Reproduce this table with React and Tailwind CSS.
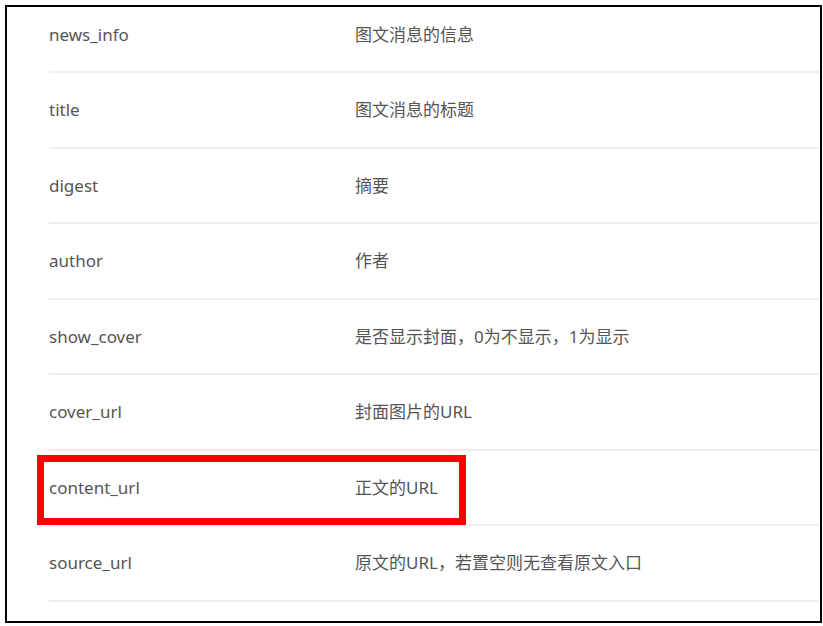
const rows = [
  ["news_info", "图文消息的信息"],
  ["title", "图文消息的标题"],
  ["digest", "摘要"],
  ["author", "作者"],
  ["show_cover", "是否显示封面，0为不显示，1为显示"],
  ["cover_url", "封面图片的URL"],
  ["content_url", "正文的URL"],
  ["source_url", "原文的URL，若置空则无查看原文入口"],
];

const App = () => {
  return (
    <div className="w-[823px] h-[626px] bg-white pt-[5px] pl-[5px] overflow-hidden">
      <div
        className="relative w-[817px] h-[618px] border-2 border-black overflow-hidden text-[17px] text-[#555]"
        style={{ fontFamily: '"Noto Sans", "Noto Sans CJK SC", sans-serif' }}
      >
        <div className="pl-[42px] -mt-[9.5px]">
          {rows.map(([key, desc]) => (
            <div
              key={key}
              className="flex items-center h-[75.5px] border-b-2 border-[#eeeeee]"
            >
              <div className="w-[306px] shrink-0">{key}</div>
              <div>{desc}</div>
            </div>
          ))}
        </div>

        {/* annotation box over content_url */}
        <div className="absolute left-[30px] top-[448px] w-[429px] h-[70px] border-[7px] border-[#ff0000]" />
      </div>
    </div>
  );
};

export default App;
